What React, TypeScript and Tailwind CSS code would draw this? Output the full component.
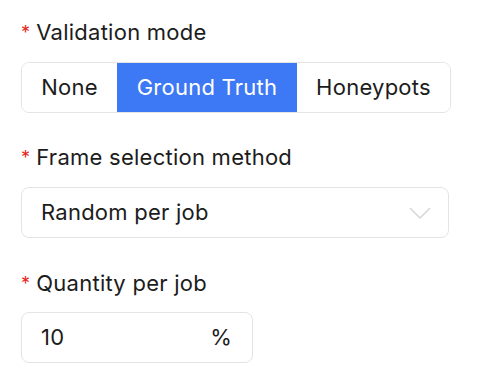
import React, { useState } from 'react';

const modes = [
  { name: 'None', width: 'w-[95px]' },
  { name: 'Ground Truth', width: 'w-[180px]' },
  { name: 'Honeypots', width: 'w-[153px]' },
];

function Label({ text }: { text: string }) {
  return (
    <div className="flex items-center h-7 text-[22px] text-[#1c1c1c]">
      <span className="text-[#e5261c] mr-[6px] text-[18px] leading-none relative top-[1px]">*</span>
      {text}
    </div>
  );
}

export default function App() {
  const [mode, setMode] = useState('Ground Truth');

  return (
    <div className="bg-white w-[478px] h-[385px] pl-[21px] pt-[18px] tracking-[0.25px] font-['Inter',sans-serif]">
      <Label text="Validation mode" />
      <div className="mt-[16px] flex w-fit h-[51px] border border-[#e4e4e4] rounded-[8px] overflow-hidden text-[22px]">
        {modes.map((m) => (
          <button
            key={m.name}
            onClick={() => setMode(m.name)}
            className={
              mode === m.name
                ? `${m.width} bg-[#3d78f5] text-white`
                : `${m.width} bg-white text-[#1c1c1c]`
            }
          >
            {m.name}
          </button>
        ))}
      </div>

      <div className="mt-[30px]">
        <Label text="Frame selection method" />
      </div>
      <div className="mt-[16px] w-[428px] h-[51px] border border-[#e4e4e4] rounded-[8px] flex items-center justify-between pl-[19px] pr-[17px] text-[22px] text-[#1c1c1c]">
        <span>Random per job</span>
        <svg width="22" height="12" viewBox="0 0 22 12" fill="none">
          <path d="M1 1l10 10L21 1" stroke="#d6d6d6" strokeWidth="1.5" />
        </svg>
      </div>

      <div className="mt-[31px]">
        <Label text="Quantity per job" />
      </div>
      <div className="mt-[15px] w-[232px] h-[51px] border border-[#e4e4e4] rounded-[8px] flex items-center justify-between pl-[19px] pr-[20px] text-[22px] text-[#1c1c1c]">
        <span>10</span>
        <span>%</span>
      </div>
    </div>
  );
}
